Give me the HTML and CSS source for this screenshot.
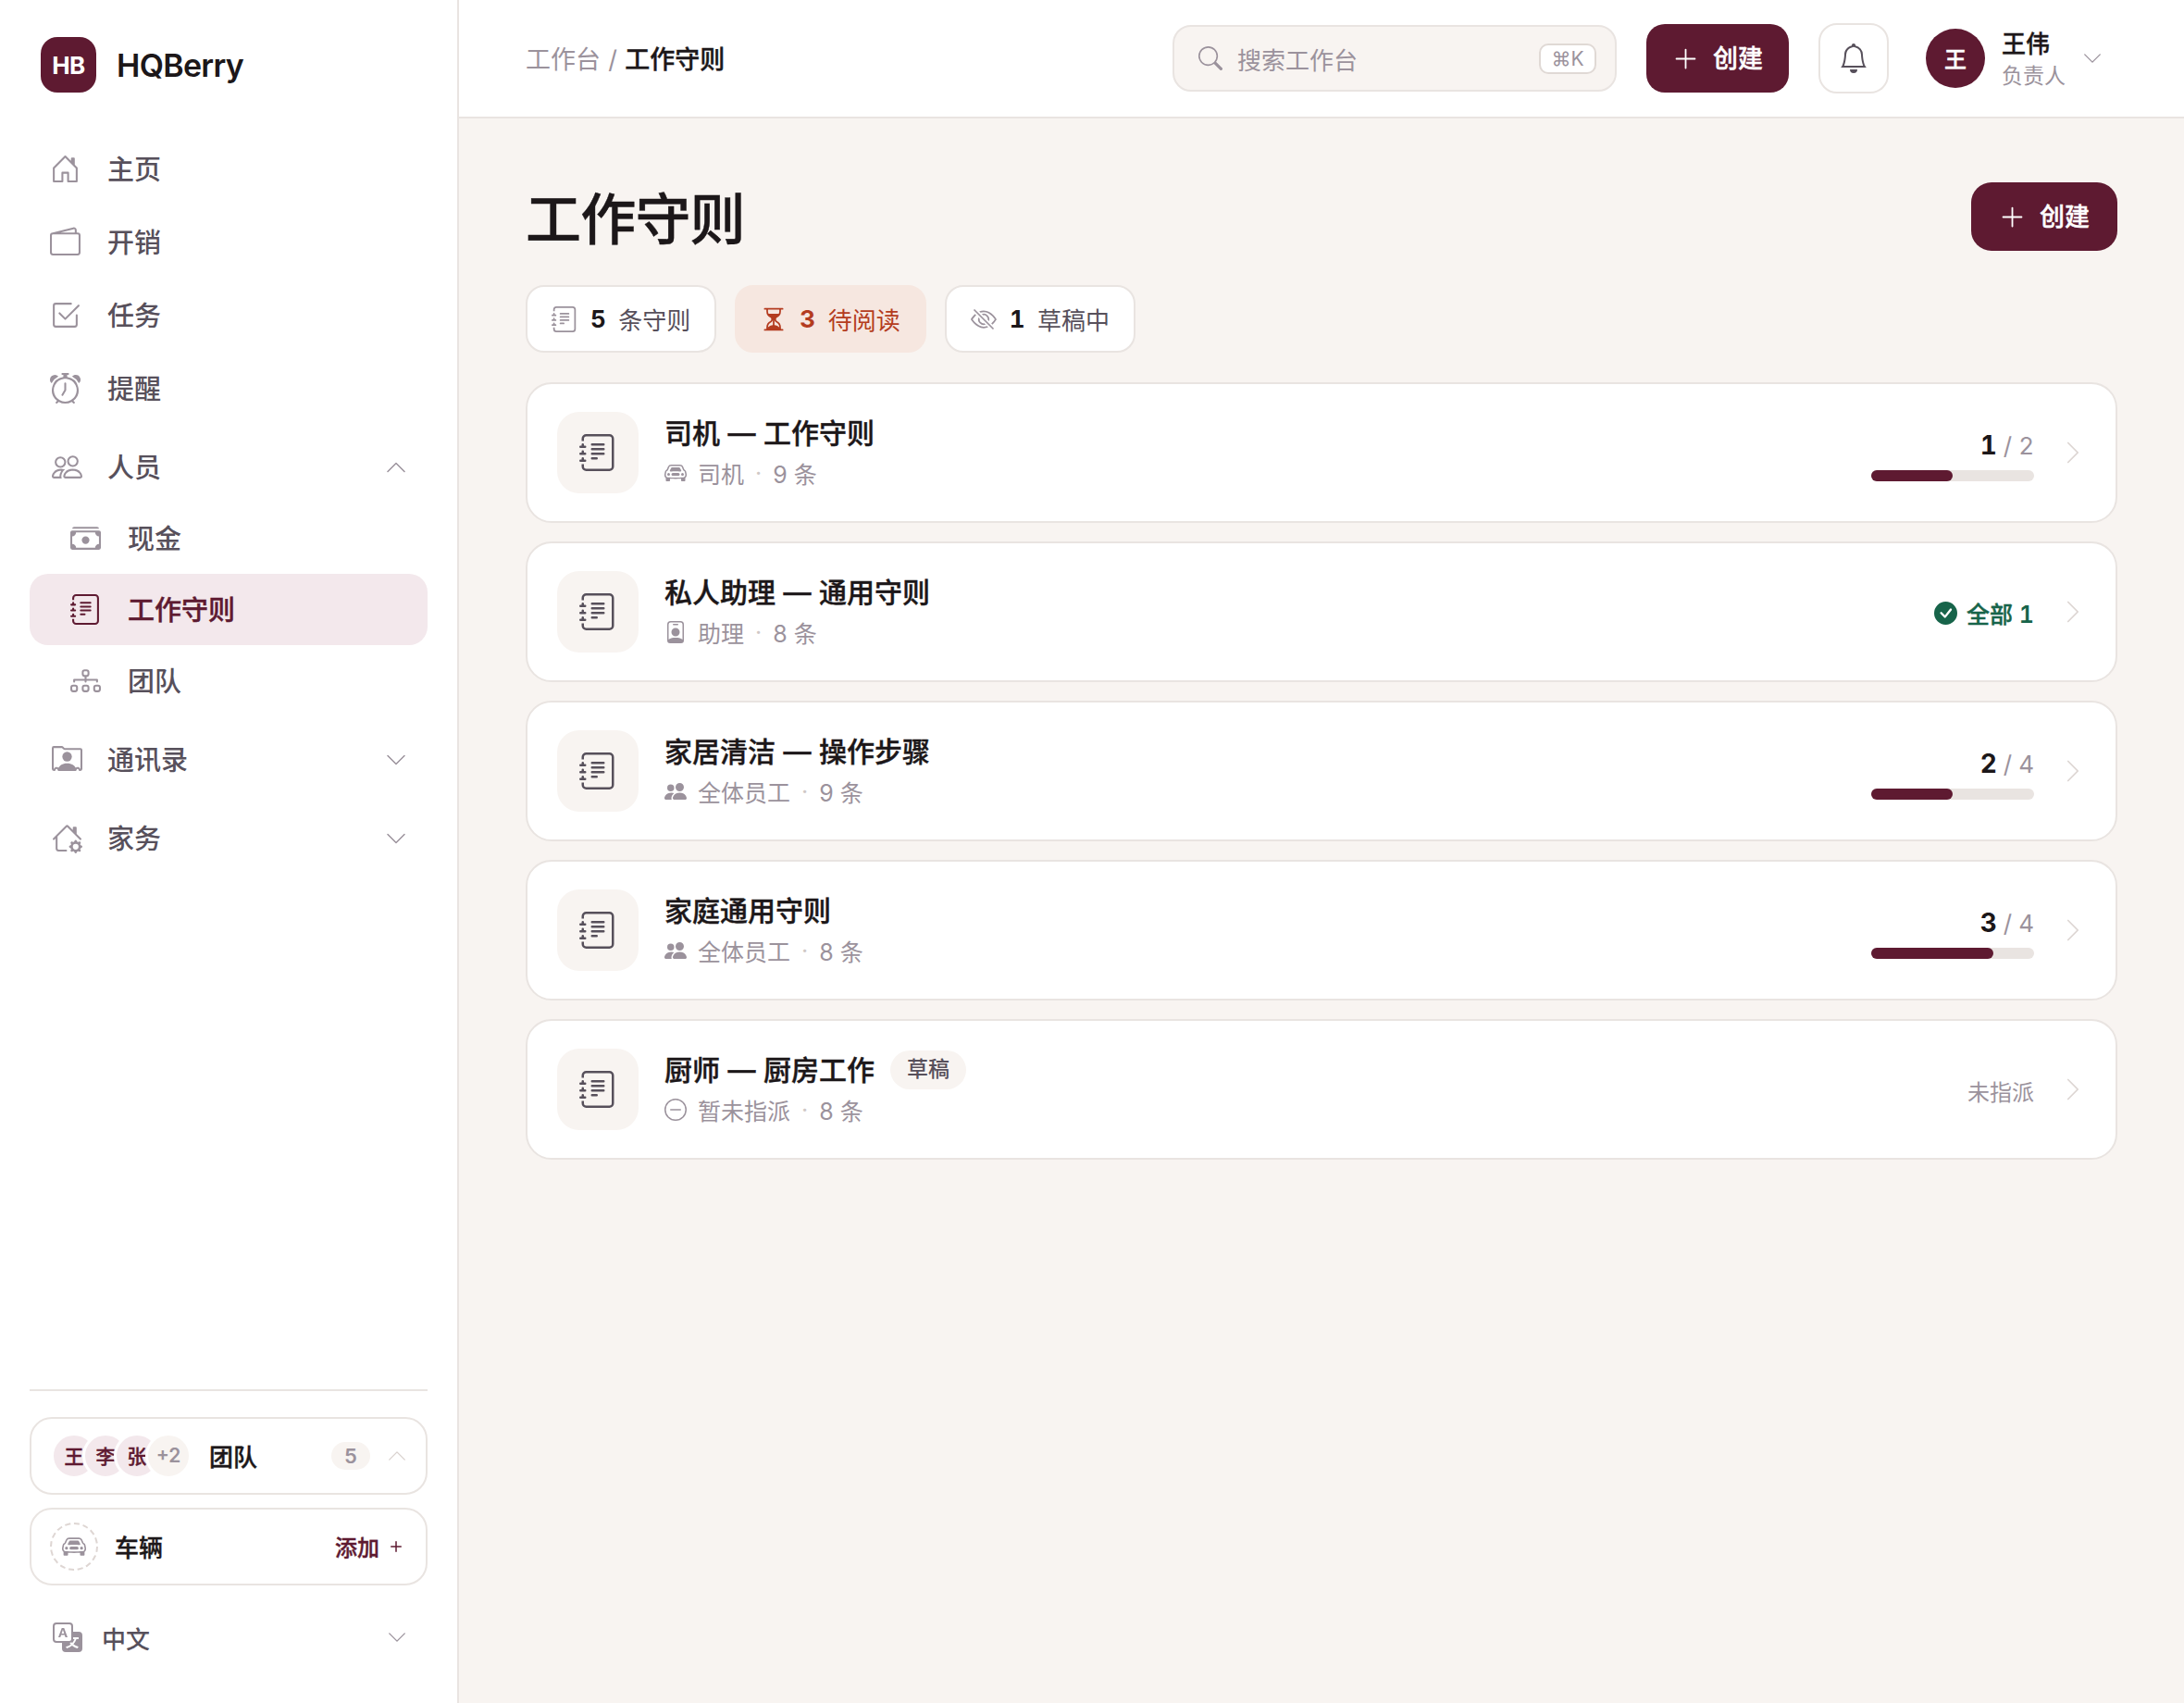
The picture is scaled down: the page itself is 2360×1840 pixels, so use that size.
FILE: index.html
```html
<!DOCTYPE html>
<html lang="zh-CN">
<head>
    <meta charset="utf-8">
    <title>工作守则</title>
    <link rel="stylesheet" href="styles.css">
</head>
<body>

<!-- icon sprite -->
<svg class="sprite" xmlns="http://www.w3.org/2000/svg">
    <symbol id="i-house" viewBox="0 0 16 16"><path d="M8.354 1.146a.5.5 0 0 0-.708 0l-6 6A.5.5 0 0 0 1.5 7.5v7a.5.5 0 0 0 .5.5h4.5a.5.5 0 0 0 .5-.5v-4h2v4a.5.5 0 0 0 .5.5H14a.5.5 0 0 0 .5-.5v-7a.5.5 0 0 0-.146-.354L13 5.793V2.5a.5.5 0 0 0-.5-.5h-1a.5.5 0 0 0-.5.5v1.293zM2.5 14V7.707l5.5-5.5 5.5 5.5V14H10v-4a.5.5 0 0 0-.5-.5h-3a.5.5 0 0 0-.5.5v4z"/></symbol>
    <symbol id="i-wallet" viewBox="0 0 16 16"><path d="M12.136.326A1.5 1.5 0 0 1 14 1.78V3h.5A1.5 1.5 0 0 1 16 4.5v9a1.5 1.5 0 0 1-1.5 1.5h-13A1.5 1.5 0 0 1 0 13.5v-9a1.5 1.5 0 0 1 1.432-1.499zM5.562 3H13V1.78a.5.5 0 0 0-.621-.484zM1.5 4a.5.5 0 0 0-.5.5v9a.5.5 0 0 0 .5.5h13a.5.5 0 0 0 .5-.5v-9a.5.5 0 0 0-.5-.5z"/></symbol>
    <symbol id="i-check-square" viewBox="0 0 16 16"><path d="M3 14.5A1.5 1.5 0 0 1 1.5 13V3A1.5 1.5 0 0 1 3 1.5h8a.5.5 0 0 1 0 1H3a.5.5 0 0 0-.5.5v10a.5.5 0 0 0 .5.5h10a.5.5 0 0 0 .5-.5V8a.5.5 0 0 1 1 0v5a1.5 1.5 0 0 1-1.5 1.5z"/><path d="m8.354 10.354 7-7a.5.5 0 0 0-.708-.708L8 9.293 5.354 6.646a.5.5 0 1 0-.708.708l3 3a.5.5 0 0 0 .708 0"/></symbol>
    <symbol id="i-alarm" viewBox="0 0 16 16"><path d="M8.5 5.5a.5.5 0 0 0-1 0v3.362l-1.429 2.38a.5.5 0 1 0 .858.515l1.5-2.5A.5.5 0 0 0 8.5 9z"/><path d="M6.5 0a.5.5 0 0 0 0 1H7v1.07a7.001 7.001 0 0 0-3.273 12.474l-.602.602a.5.5 0 0 0 .707.708l.746-.746A6.97 6.97 0 0 0 8 16a6.97 6.97 0 0 0 3.422-.892l.746.746a.5.5 0 0 0 .707-.708l-.601-.602A7.001 7.001 0 0 0 9 2.07V1h.5a.5.5 0 0 0 0-1zm1.038 3.018a6 6 0 0 1 .924 0 6 6 0 1 1-.924 0M0 3.5c0 .753.333 1.429.86 1.887A8.04 8.04 0 0 1 4.387 1.86 2.5 2.5 0 0 0 0 3.5M13.5 1c-.753 0-1.429.333-1.887.86a8.04 8.04 0 0 1 3.527 3.527A2.5 2.5 0 0 0 13.5 1"/></symbol>
    <symbol id="i-people" viewBox="0 0 16 16"><path d="M15 14s1 0 1-1-1-4-5-4-5 3-5 4 1 1 1 1zm-7.978-1L7 12.996c.001-.264.167-1.03.76-1.72C8.312 10.629 9.282 10 11 10c1.717 0 2.687.63 3.24 1.276.593.69.758 1.457.76 1.72l-.008.002-.014.002zM11 7a2 2 0 1 0 0-4 2 2 0 0 0 0 4m3-2a3 3 0 1 1-6 0 3 3 0 0 1 6 0M6.936 9.28a6 6 0 0 0-1.23-.247A7 7 0 0 0 5 9c-4 0-5 3-5 4q0 1 1 1h4.216A2.24 2.24 0 0 1 5 13c0-1.01.377-2.042 1.09-2.904.243-.294.526-.569.846-.816M4.92 10A5.5 5.5 0 0 0 4 13H1c0-.26.164-1.03.76-1.724.545-.636 1.492-1.256 3.16-1.275ZM1.5 5.5a3 3 0 1 1 6 0 3 3 0 0 1-6 0m3-2a2 2 0 1 0 0 4 2 2 0 0 0 0-4"/></symbol>
    <symbol id="i-people-fill" viewBox="0 0 16 16"><path d="M7 14s-1 0-1-1 1-4 5-4 5 3 5 4-1 1-1 1zm4-6a3 3 0 1 0 0-6 3 3 0 0 0 0 6m-5.784 6A2.24 2.24 0 0 1 5 13c0-1.355.68-2.75 1.936-3.72A6.3 6.3 0 0 0 5 9c-4 0-5 3-5 4s1 1 1 1zM4.5 8a2.5 2.5 0 1 0 0-5 2.5 2.5 0 0 0 0 5"/></symbol>
    <symbol id="i-cash" viewBox="0 0 16 16"><path d="M1 3a1 1 0 0 1 1-1h12a1 1 0 0 1 1 1zm7 8a2 2 0 1 0 0-4 2 2 0 0 0 0 4"/><path d="M0 5a1 1 0 0 1 1-1h14a1 1 0 0 1 1 1v8a1 1 0 0 1-1 1H1a1 1 0 0 1-1-1zm3 0a2 2 0 0 1-2 2v4a2 2 0 0 1 2 2h10a2 2 0 0 1 2-2V7a2 2 0 0 1-2-2z"/></symbol>
    <symbol id="i-journal" viewBox="0 0 16 16"><path d="M5 10.5a.5.5 0 0 1 .5-.5h2a.5.5 0 0 1 0 1h-2a.5.5 0 0 1-.5-.5m0-2a.5.5 0 0 1 .5-.5h5a.5.5 0 0 1 0 1h-5a.5.5 0 0 1-.5-.5m0-2a.5.5 0 0 1 .5-.5h5a.5.5 0 0 1 0 1h-5a.5.5 0 0 1-.5-.5m0-2a.5.5 0 0 1 .5-.5h5a.5.5 0 0 1 0 1h-5a.5.5 0 0 1-.5-.5"/><path d="M3 0h10a2 2 0 0 1 2 2v12a2 2 0 0 1-2 2H3a2 2 0 0 1-2-2v-1h1v1a1 1 0 0 0 1 1h10a1 1 0 0 0 1-1V2a1 1 0 0 0-1-1H3a1 1 0 0 0-1 1v1H1V2a2 2 0 0 1 2-2"/><path d="M1 5v-.5a.5.5 0 0 1 1 0V5h.5a.5.5 0 0 1 0 1h-2a.5.5 0 0 1 0-1zm0 3v-.5a.5.5 0 0 1 1 0V8h.5a.5.5 0 0 1 0 1h-2a.5.5 0 0 1 0-1zm0 3v-.5a.5.5 0 0 1 1 0v.5h.5a.5.5 0 0 1 0 1h-2a.5.5 0 0 1 0-1z"/></symbol>
    <symbol id="i-diagram" viewBox="0 0 16 16"><path fill-rule="evenodd" d="M6 3.5A1.5 1.5 0 0 1 7.5 2h1A1.5 1.5 0 0 1 10 3.5v1A1.5 1.5 0 0 1 8.5 6v1H14a.5.5 0 0 1 .5.5v1a.5.5 0 0 1-1 0V8h-5v.5a.5.5 0 0 1-1 0V8h-5v.5a.5.5 0 0 1-1 0v-1A.5.5 0 0 1 2 7h5.5V6A1.5 1.5 0 0 1 6 4.5zM8.5 5a.5.5 0 0 0 .5-.5v-1a.5.5 0 0 0-.5-.5h-1a.5.5 0 0 0-.5.5v1a.5.5 0 0 0 .5.5zM0 11.5A1.5 1.5 0 0 1 1.5 10h1A1.5 1.5 0 0 1 4 11.5v1A1.5 1.5 0 0 1 2.5 14h-1A1.5 1.5 0 0 1 0 12.5zm1.5-.5a.5.5 0 0 0-.5.5v1a.5.5 0 0 0 .5.5h1a.5.5 0 0 0 .5-.5v-1a.5.5 0 0 0-.5-.5zm4.5.5A1.5 1.5 0 0 1 7.5 10h1a1.5 1.5 0 0 1 1.5 1.5v1A1.5 1.5 0 0 1 8.5 14h-1A1.5 1.5 0 0 1 6 12.5zm1.5-.5a.5.5 0 0 0-.5.5v1a.5.5 0 0 0 .5.5h1a.5.5 0 0 0 .5-.5v-1a.5.5 0 0 0-.5-.5zm4.5.5a1.5 1.5 0 0 1 1.5-1.5h1a1.5 1.5 0 0 1 1.5 1.5v1a1.5 1.5 0 0 1-1.5 1.5h-1a1.5 1.5 0 0 1-1.5-1.5zm1.5-.5a.5.5 0 0 0-.5.5v1a.5.5 0 0 0 .5.5h1a.5.5 0 0 0 .5-.5v-1a.5.5 0 0 0-.5-.5z"/></symbol>
    <symbol id="i-rolodex" viewBox="0 0 16 16"><path d="M8 9.05a2.5 2.5 0 1 0 0-5 2.5 2.5 0 0 0 0 5"/><path d="M1 1a1 1 0 0 0-1 1v11a1 1 0 0 0 1 1h.5a.5.5 0 0 0 .5-.5.5.5 0 0 1 1 0 .5.5 0 0 0 .5.5h9a.5.5 0 0 0 .5-.5.5.5 0 0 1 1 0 .5.5 0 0 0 .5.5h.5a1 1 0 0 0 1-1V3a1 1 0 0 0-1-1H6.707L6 1.293A1 1 0 0 0 5.293 1zm0 1h4.293L6 2.707A1 1 0 0 0 6.707 3H15v10h-.085a1.5 1.5 0 0 0-2.4-.63C11.885 11.223 10.554 10 8 10c-2.555 0-3.886 1.224-4.514 2.37a1.5 1.5 0 0 0-2.4.63H1z"/></symbol>
    <symbol id="i-house-gear" viewBox="0 0 16 16"><path d="M7.293 1.5a1 1 0 0 1 1.414 0L11 3.793V2.5a.5.5 0 0 1 .5-.5h1a.5.5 0 0 1 .5.5v3.293l2.354 2.353a.5.5 0 0 1-.708.708L8 2.207l-5 5V13.5a.5.5 0 0 0 .5.5h4a.5.5 0 0 1 0 1h-4A1.5 1.5 0 0 1 2 13.5V8.207l-.646.647a.5.5 0 1 1-.708-.708z"/><path d="M11.886 9.46c.18-.613 1.048-.613 1.229 0l.043.148a.64.64 0 0 0 .921.382l.136-.074c.561-.306 1.175.308.87.869l-.075.136a.64.64 0 0 0 .382.92l.149.045c.612.18.612 1.048 0 1.229l-.15.043a.64.64 0 0 0-.38.921l.074.136c.305.561-.309 1.175-.87.87l-.136-.075a.64.64 0 0 0-.92.382l-.045.149c-.18.612-1.048.612-1.229 0l-.043-.15a.64.64 0 0 0-.921-.38l-.136.074c-.561.305-1.175-.309-.87-.87l.075-.136a.64.64 0 0 0-.382-.92l-.148-.045c-.613-.18-.613-1.048 0-1.229l.148-.043a.64.64 0 0 0 .382-.921l-.074-.136c-.306-.561.308-1.175.869-.87l.136.075a.64.64 0 0 0 .92-.382zM14 12.5a1.5 1.5 0 1 0-3 0 1.5 1.5 0 0 0 3 0"/></symbol>
    <symbol id="i-down" viewBox="0 0 16 16"><path d="M1.646 4.646a.5.5 0 0 1 .708 0L8 10.293l5.646-5.647a.5.5 0 0 1 .708.708l-6 6a.5.5 0 0 1-.708 0l-6-6a.5.5 0 0 1 0-.708"/></symbol>
    <symbol id="i-up" viewBox="0 0 16 16"><path d="M7.646 4.646a.5.5 0 0 1 .708 0l6 6a.5.5 0 0 1-.708.708L8 5.707l-5.646 5.647a.5.5 0 0 1-.708-.708z"/></symbol>
    <symbol id="i-right" viewBox="0 0 16 16"><path d="M4.646 1.646a.5.5 0 0 1 .708 0l6 6a.5.5 0 0 1 0 .708l-6 6a.5.5 0 0 1-.708-.708L10.293 8 4.646 2.354a.5.5 0 0 1 0-.708"/></symbol>
    <symbol id="i-car" viewBox="0 0 16 16"><path d="M4 9a1 1 0 1 1-2 0 1 1 0 0 1 2 0m10 0a1 1 0 1 1-2 0 1 1 0 0 1 2 0M6 8a1 1 0 0 0 0 2h4a1 1 0 1 0 0-2zM4.862 4.276 3.906 6.19a.51.51 0 0 0 .497.731c.91-.073 2.35-.17 3.597-.17s2.688.097 3.597.17a.51.51 0 0 0 .497-.731l-.956-1.913A.5.5 0 0 0 10.691 4H5.309a.5.5 0 0 0-.447.276"/><path fill-rule="evenodd" d="M2.52 3.515A2.5 2.5 0 0 1 4.82 2h6.362c1 0 1.904.596 2.298 1.515l.792 1.848c.075.175.21.319.38.404.5.25.855.715.965 1.262l.335 1.679q.05.242.049.49v.413c0 .814-.39 1.543-1 1.997V13.5a.5.5 0 0 1-.5.5h-2a.5.5 0 0 1-.5-.5v-1.338c-1.292.048-2.745.088-4 .088s-2.708-.04-4-.088V13.5a.5.5 0 0 1-.5.5h-2a.5.5 0 0 1-.5-.5v-1.892c-.61-.454-1-1.183-1-1.997v-.413a2.5 2.5 0 0 1 .049-.49l.335-1.68c.11-.546.465-1.012.964-1.261a.8.8 0 0 0 .381-.404zM4.82 3a1.5 1.5 0 0 0-1.379.91l-.792 1.847a1.8 1.8 0 0 1-.853.904.8.8 0 0 0-.43.564L1.03 8.904a1.5 1.5 0 0 0-.03.294v.413c0 .796.62 1.448 1.408 1.484 1.555.07 3.786.155 5.592.155s4.037-.084 5.592-.155A1.48 1.48 0 0 0 15 9.611v-.413q0-.148-.03-.294l-.335-1.68a.8.8 0 0 0-.43-.563 1.8 1.8 0 0 1-.853-.904l-.792-1.848A1.5 1.5 0 0 0 11.18 3z"/></symbol>
    <symbol id="i-translate" viewBox="0 0 16 16"><path d="M4.545 6.714 4.11 8H3l1.862-5h1.284L8 8H6.833l-.435-1.286zm1.634-.736L5.5 3.956h-.049l-.679 2.022z"/><path d="M0 2a2 2 0 0 1 2-2h7a2 2 0 0 1 2 2v3h3a2 2 0 0 1 2 2v7a2 2 0 0 1-2 2H7a2 2 0 0 1-2-2v-3H2a2 2 0 0 1-2-2zm2-1a1 1 0 0 0-1 1v7a1 1 0 0 0 1 1h7a1 1 0 0 0 1-1V2a1 1 0 0 0-1-1zm7.138 9.995q.289.451.63.846c-.748.575-1.673 1.001-2.768 1.292.178.217.451.635.555.867 1.125-.359 2.08-.844 2.886-1.494.777.665 1.739 1.165 2.93 1.472.133-.254.414-.673.629-.89-1.125-.253-2.057-.694-2.82-1.284.681-.747 1.222-1.651 1.621-2.757H14V8h-3v1.047h.765c-.318.844-.74 1.546-1.272 2.13a6 6 0 0 1-.415-.492 2 2 0 0 1-.94.31"/></symbol>
    <symbol id="i-search" viewBox="0 0 16 16"><path d="M11.742 10.344a6.5 6.5 0 1 0-1.397 1.398h-.001q.044.06.098.115l3.85 3.85a1 1 0 0 0 1.415-1.414l-3.85-3.85a1 1 0 0 0-.115-.1zM12 6.5a5.5 5.5 0 1 1-11 0 5.5 5.5 0 0 1 11 0"/></symbol>
    <symbol id="i-plus-lg" viewBox="0 0 16 16"><path d="M8 2a.5.5 0 0 1 .5.5v5h5a.5.5 0 0 1 0 1h-5v5a.5.5 0 0 1-1 0v-5h-5a.5.5 0 0 1 0-1h5v-5A.5.5 0 0 1 8 2"/></symbol>
    <symbol id="i-plus" viewBox="0 0 16 16"><path d="M8 4a.5.5 0 0 1 .5.5v3h3a.5.5 0 0 1 0 1h-3v3a.5.5 0 0 1-1 0v-3h-3a.5.5 0 0 1 0-1h3v-3A.5.5 0 0 1 8 4"/></symbol>
    <symbol id="i-bell" viewBox="0 0 16 16"><path d="M8 16a2 2 0 0 0 2-2H6a2 2 0 0 0 2 2M8 1.918l-.797.161A4 4 0 0 0 4 6c0 .628-.134 2.197-.459 3.742-.16.767-.376 1.566-.663 2.258h10.244c-.287-.692-.502-1.49-.663-2.258C12.134 8.197 12 6.628 12 6a4 4 0 0 0-3.203-3.92zM14.22 12c.223.447.481.801.78 1H1c.299-.199.557-.553.78-1C2.68 10.2 3 6.88 3 6c0-2.42 1.72-4.44 4.005-4.901a1 1 0 1 1 1.99 0A5 5 0 0 1 13 6c0 .88.32 4.2 1.22 6"/></symbol>
    <symbol id="i-hourglass" viewBox="0 0 16 16"><path d="M2.5 15a.5.5 0 1 1 0-1h1v-1a4.5 4.5 0 0 1 2.557-4.06c.29-.139.443-.377.443-.59v-.7c0-.213-.154-.451-.443-.59A4.5 4.5 0 0 1 3.5 3V2h-1a.5.5 0 0 1 0-1h11a.5.5 0 0 1 0 1h-1v1a4.5 4.5 0 0 1-2.557 4.06c-.29.139-.443.377-.443.59v.7c0 .213.154.451.443.59A4.5 4.5 0 0 1 12.5 13v1h1a.5.5 0 0 1 0 1zm2-13v1c0 .537.12 1.045.337 1.5h6.326c.216-.455.337-.963.337-1.5V2zm3 6.35c0 .701-.478 1.236-1.011 1.492A3.5 3.5 0 0 0 4.5 13s.866-1.299 3-1.48zm1 0v3.17c2.134.181 3 1.48 3 1.48a3.5 3.5 0 0 0-1.989-3.158C8.978 9.586 8.5 9.052 8.5 8.351z"/></symbol>
    <symbol id="i-eye-slash" viewBox="0 0 16 16"><path d="M13.359 11.238C15.06 9.72 16 8 16 8s-3-5.5-8-5.5a7 7 0 0 0-2.79.588l.77.771A6 6 0 0 1 8 3.5c2.12 0 3.879 1.168 5.168 2.457A13 13 0 0 1 14.828 8q-.086.13-.195.288c-.335.48-.83 1.12-1.465 1.755q-.247.248-.517.486z"/><path d="M11.297 9.176a3.5 3.5 0 0 0-4.474-4.474l.823.823a2.5 2.5 0 0 1 2.829 2.829zm-2.943 1.299.822.822a3.5 3.5 0 0 1-4.474-4.474l.823.823a2.5 2.5 0 0 0 2.829 2.829"/><path d="M3.35 5.47q-.27.24-.518.487A13 13 0 0 0 1.172 8l.195.288c.335.48.83 1.12 1.465 1.755C4.121 11.332 5.881 12.5 8 12.5c.716 0 1.39-.133 2.02-.36l.77.772A7 7 0 0 1 8 13.5C3 13.5 0 8 0 8s.939-1.721 2.641-3.238l.708.709zm10.296 8.884-12-12 .708-.708 12 12z"/></symbol>
    <symbol id="i-badge" viewBox="0 0 16 16"><path d="M6.5 2a.5.5 0 0 0 0 1h3a.5.5 0 0 0 0-1zM11 8a3 3 0 1 1-6 0 3 3 0 0 1 6 0"/><path d="M4.5 0A2.5 2.5 0 0 0 2 2.5V14a2 2 0 0 0 2 2h8a2 2 0 0 0 2-2V2.5A2.5 2.5 0 0 0 11.5 0zM3 2.5A1.5 1.5 0 0 1 4.5 1h7A1.5 1.5 0 0 1 13 2.5v10.795a4.2 4.2 0 0 0-.776-.492C11.392 12.387 10.063 12 8 12s-3.392.387-4.224.803a4.2 4.2 0 0 0-.776.492z"/></symbol>
    <symbol id="i-dash-circle" viewBox="0 0 16 16"><path d="M8 15A7 7 0 1 1 8 1a7 7 0 0 1 0 14m0 1A8 8 0 1 0 8 0a8 8 0 0 0 0 16"/><path d="M4 8a.5.5 0 0 1 .5-.5h7a.5.5 0 0 1 0 1h-7A.5.5 0 0 1 4 8"/></symbol>
    <symbol id="i-check-fill" viewBox="0 0 16 16"><path d="M16 8A8 8 0 1 1 0 8a8 8 0 0 1 16 0m-3.97-3.03a.75.75 0 0 0-1.08.022L7.477 9.417 5.384 7.323a.75.75 0 0 0-1.06 1.06L6.97 11.03a.75.75 0 0 0 1.079-.02l3.992-4.99a.75.75 0 0 0-.01-1.05z"/></symbol>
</svg>

<div class="app">
    <aside class="sidebar">
        <div class="brand">
            <span class="brand-mark">HB</span>
            <span class="brand-name">HQBerry</span>
        </div>

        <nav class="nav">
            <a class="nav-item"><svg class="icon"><use href="#i-house"/></svg><span>主页</span></a>
            <a class="nav-item"><svg class="icon"><use href="#i-wallet"/></svg><span>开销</span></a>
            <a class="nav-item"><svg class="icon"><use href="#i-check-square"/></svg><span>任务</span></a>
            <a class="nav-item"><svg class="icon"><use href="#i-alarm"/></svg><span>提醒</span></a>

            <div class="nav-group">
                <a class="nav-head"><svg class="icon"><use href="#i-people"/></svg><span>人员</span><svg class="chev"><use href="#i-up"/></svg></a>
                <a class="nav-sub"><svg class="icon"><use href="#i-cash"/></svg><span>现金</span></a>
                <a class="nav-sub active"><svg class="icon"><use href="#i-journal"/></svg><span>工作守则</span></a>
                <a class="nav-sub"><svg class="icon"><use href="#i-diagram"/></svg><span>团队</span></a>
            </div>
            <div class="nav-group">
                <a class="nav-head"><svg class="icon"><use href="#i-rolodex"/></svg><span>通讯录</span><svg class="chev"><use href="#i-down"/></svg></a>
            </div>
            <div class="nav-group">
                <a class="nav-head"><svg class="icon"><use href="#i-house-gear"/></svg><span>家务</span><svg class="chev"><use href="#i-down"/></svg></a>
            </div>
        </nav>

        <div class="side-foot">
            <div class="side-card">
                <div class="stack">
                    <span class="mini">王</span>
                    <span class="mini">李</span>
                    <span class="mini">张</span>
                    <span class="mini more">+2</span>
                </div>
                <span class="side-title team">团队</span>
                <span class="count">5</span>
                <svg class="chev small light"><use href="#i-up"/></svg>
            </div>
            <div class="side-card">
                <span class="dashed"><svg class="car"><use href="#i-car"/></svg></span>
                <span class="side-title">车辆</span>
                <span class="add"><span>添加</span><svg class="add-plus"><use href="#i-plus"/></svg></span>
            </div>
            <div class="lang">
                <svg class="lang-icon"><use href="#i-translate"/></svg>
                <span>中文</span>
                <svg class="chev small"><use href="#i-down"/></svg>
            </div>
        </div>
    </aside>

    <div class="content">
        <header class="topbar">
            <div class="crumbs">工作台 / <b>工作守则</b></div>
            <div class="search">
                <svg class="search-icon"><use href="#i-search"/></svg>
                <span class="search-text">搜索工作台</span>
                <span class="kbd">⌘K</span>
            </div>
            <button class="btn"><svg class="btn-icon"><use href="#i-plus-lg"/></svg><span>创建</span></button>
            <button class="bell"><svg class="bell-icon"><use href="#i-bell"/></svg></button>
            <div class="user">
                <span class="avatar">王</span>
                <div class="user-text">
                    <span class="user-name">王伟</span>
                    <span class="user-role">负责人</span>
                </div>
                <svg class="chev small"><use href="#i-down"/></svg>
            </div>
        </header>

        <main class="main">
            <div class="page-head">
                <h1 class="page-title">工作守则</h1>
                <button class="btn wide"><svg class="btn-icon"><use href="#i-plus-lg"/></svg><span>创建</span></button>
            </div>

            <div class="pills">
                <div class="pill"><svg class="pill-icon"><use href="#i-journal"/></svg><b>5</b><span>条守则</span></div>
                <div class="pill warn"><svg class="pill-icon"><use href="#i-hourglass"/></svg><b>3</b><span>待阅读</span></div>
                <div class="pill"><svg class="pill-icon"><use href="#i-eye-slash"/></svg><b>1</b><span>草稿中</span></div>
            </div>

            <div class="list">
                <div class="card">
                    <span class="tile"><svg class="tile-icon"><use href="#i-journal"/></svg></span>
                    <div class="info">
                        <div class="name">司机 — 工作守则</div>
                        <div class="meta"><svg class="meta-icon"><use href="#i-car"/></svg><span>司机</span><span class="dot">·</span><span>9 条</span></div>
                    </div>
                    <div class="progress">
                        <div class="nums"><b>1</b> / 2</div>
                        <div class="bar"><div class="fill" style="width: 50%"></div></div>
                    </div>
                    <svg class="go"><use href="#i-right"/></svg>
                </div>

                <div class="card">
                    <span class="tile"><svg class="tile-icon"><use href="#i-journal"/></svg></span>
                    <div class="info">
                        <div class="name">私人助理 — 通用守则</div>
                        <div class="meta"><svg class="meta-icon"><use href="#i-badge"/></svg><span>助理</span><span class="dot">·</span><span>8 条</span></div>
                    </div>
                    <div class="done"><svg class="done-icon"><use href="#i-check-fill"/></svg><span>全部 <b>1</b></span></div>
                    <svg class="go"><use href="#i-right"/></svg>
                </div>

                <div class="card">
                    <span class="tile"><svg class="tile-icon"><use href="#i-journal"/></svg></span>
                    <div class="info">
                        <div class="name">家居清洁 — 操作步骤</div>
                        <div class="meta"><svg class="meta-icon"><use href="#i-people-fill"/></svg><span>全体员工</span><span class="dot">·</span><span>9 条</span></div>
                    </div>
                    <div class="progress">
                        <div class="nums"><b>2</b> / 4</div>
                        <div class="bar"><div class="fill" style="width: 50%"></div></div>
                    </div>
                    <svg class="go"><use href="#i-right"/></svg>
                </div>

                <div class="card">
                    <span class="tile"><svg class="tile-icon"><use href="#i-journal"/></svg></span>
                    <div class="info">
                        <div class="name">家庭通用守则</div>
                        <div class="meta"><svg class="meta-icon"><use href="#i-people-fill"/></svg><span>全体员工</span><span class="dot">·</span><span>8 条</span></div>
                    </div>
                    <div class="progress">
                        <div class="nums"><b>3</b> / 4</div>
                        <div class="bar"><div class="fill" style="width: 75%"></div></div>
                    </div>
                    <svg class="go"><use href="#i-right"/></svg>
                </div>

                <div class="card">
                    <span class="tile"><svg class="tile-icon"><use href="#i-journal"/></svg></span>
                    <div class="info">
                        <div class="name">厨师 — 厨房工作<span class="tag">草稿</span></div>
                        <div class="meta"><svg class="meta-icon"><use href="#i-dash-circle"/></svg><span>暂未指派</span><span class="dot">·</span><span>8 条</span></div>
                    </div>
                    <div class="none">未指派</div>
                    <svg class="go"><use href="#i-right"/></svg>
                </div>
            </div>
        </main>
    </div>
</div>

</body>
</html>
```
FILE: styles.css
```css
:root {
    --berry: #5e1a31;
    --berry-soft: #f3e8ec;
    --bg: #f8f4f1;
    --line: #e9e4e1;
    --ink: #1c1719;
    --text: #57505b;
    --muted: #9b929c;
}

* {
    box-sizing: border-box;
}

body {
    margin: 0;
    background: var(--bg);
    color: var(--ink);
    font-family: Inter, "Noto Sans CJK SC", sans-serif;
    font-size: 28px;
}

svg {
    display: block;
    flex: none;
    fill: currentColor;
}

button {
    font: inherit;
    border: 0;
}

.sprite {
    display: none;
}

/* semibold for chinese text: medium plus a hairline stroke */
.active span,
.side-title,
.mini,
.add,
.crumbs b,
.btn,
.avatar,
.user-name,
.page-title,
.name,
.done {
    font-weight: 500;
    -webkit-text-stroke: 0.4px currentColor;
}

/* ---------- sidebar ---------- */
.app {
    display: flex;
    height: 1840px;
}

.sidebar {
    display: flex;
    flex-direction: column;
    width: 496px;
    flex: none;
    padding: 40px 32px 29px;
    background: #fff;
    border-right: 2px solid var(--line);
}

.brand {
    display: flex;
    align-items: center;
    gap: 22px;
    height: 60px;
    padding-left: 12px;
}

.brand-mark {
    display: flex;
    align-items: center;
    justify-content: center;
    width: 60px;
    height: 60px;
    border-radius: 18px;
    background: var(--berry);
    color: #fff;
    font-size: 26px;
    font-weight: 700;
    letter-spacing: -0.5px;
}

.brand-name {
    font-size: 34px;
    font-weight: 600;
    letter-spacing: -0.7px;
}

.nav {
    display: flex;
    flex-direction: column;
    gap: 2px;
    margin-top: 44px;
}

.nav-item,
.nav-head,
.nav-sub {
    display: flex;
    align-items: center;
    height: 77px;
    gap: 29px;
    padding: 0 22px;
    border-radius: 20px;
    color: var(--text);
    font-size: 29px;
    font-weight: 500;
}

.nav-head {
    gap: 27px;
    padding-left: 24px;
}

.nav-sub {
    padding-left: 44px;
}

.nav span {
    padding-bottom: 4px;
}

.nav-group {
    margin-top: 6px;
}

.icon {
    width: 33px;
    height: 33px;
    color: var(--muted);
}

.chev {
    width: 24px;
    height: 24px;
    margin-left: auto;
    color: var(--muted);
}

.chev.small {
    width: 22px;
    height: 22px;
}

.chev.light {
    color: #d9d2cf;
}

.active {
    background: var(--berry-soft);
    color: var(--berry);
}

.active .icon {
    color: var(--berry);
}

.side-foot {
    display: flex;
    flex-direction: column;
    margin-top: auto;
    padding-top: 28px;
    border-top: 2px solid var(--line);
}

.side-card {
    display: flex;
    align-items: center;
    height: 84px;
    margin-bottom: 14px;
    padding: 0 20px 0 21px;
    border: 2px solid var(--line);
    border-radius: 24px;
}

.stack {
    display: flex;
}

.mini {
    display: flex;
    align-items: center;
    justify-content: center;
    width: 50px;
    height: 50px;
    margin-right: -16px;
    padding-bottom: 2px;
    border: 3px solid #fff;
    border-radius: 50%;
    background: var(--berry-soft);
    color: var(--berry);
    font-size: 21px;
}

.mini.more {
    margin-right: 0;
    background: var(--bg);
    color: var(--muted);
    font-weight: 600;
    -webkit-text-stroke: 0;
}

.side-title {
    margin-left: 18px;
    padding-bottom: 2px;
    font-size: 26px;
}

.side-title.team {
    margin-left: 19px;
}

.count {
    width: 42px;
    height: 30px;
    margin-left: auto;
    margin-right: 18px;
    border-radius: 15px;
    background: var(--bg);
    color: var(--muted);
    font-size: 22px;
    font-weight: 600;
    line-height: 30px;
    text-align: center;
}

.count + .chev {
    margin-left: 0;
}

.dashed {
    display: flex;
    align-items: center;
    justify-content: center;
    width: 52px;
    height: 52px;
    margin-left: -1px;
    border: 2px dashed #ded6d3;
    border-radius: 50%;
    color: var(--muted);
}

.car {
    width: 26px;
    height: 26px;
}

.add {
    display: flex;
    align-items: center;
    gap: 6px;
    margin-left: auto;
    color: var(--berry);
    font-size: 24px;
}

.add span {
    padding-bottom: 2px;
}

.add-plus {
    width: 24px;
    height: 24px;
}

.lang {
    display: flex;
    align-items: center;
    height: 84px;
    padding: 0 22px 0 25px;
    color: var(--text);
    font-size: 26px;
    font-weight: 500;
}

.lang-icon {
    width: 32px;
    height: 32px;
    margin-right: 21px;
    color: var(--muted);
}

/* ---------- top bar ---------- */
.content {
    flex: 1;
    min-width: 0;
}

.topbar {
    display: flex;
    align-items: center;
    gap: 32px;
    height: 128px;
    padding: 0 72px;
    background: #fff;
    border-bottom: 2px solid var(--line);
}

.crumbs {
    margin-right: auto;
    padding-bottom: 2px;
    color: var(--muted);
    font-size: 27px;
    word-spacing: 0.7px;
}

.crumbs b {
    color: var(--ink);
}

.search {
    display: flex;
    align-items: center;
    gap: 16px;
    width: 480px;
    height: 72px;
    padding: 0 20px 0 26px;
    background: var(--bg);
    border: 2px solid var(--line);
    border-radius: 20px;
    color: var(--muted);
    font-size: 26px;
}

.search-icon {
    width: 26px;
    height: 26px;
}

.kbd {
    width: 62px;
    height: 33px;
    margin-left: auto;
    background: #fff;
    border: 2px solid #e0d9d5;
    border-radius: 10px;
    font-size: 21px;
    line-height: 29px;
    text-align: center;
}

.btn {
    display: flex;
    align-items: center;
    gap: 15px;
    height: 74px;
    padding: 0 28px;
    background: var(--berry);
    border-radius: 20px;
    color: #fff;
    font-size: 27px;
}

.btn span {
    padding-bottom: 3px;
}

.btn.wide {
    padding: 0 30px;
    border-radius: 22px;
}

.btn-icon {
    width: 29px;
    height: 29px;
}

.bell {
    display: flex;
    align-items: center;
    justify-content: center;
    width: 76px;
    height: 76px;
    padding: 0;
    background: #fff;
    border: 2px solid var(--line);
    border-radius: 20px;
    color: var(--text);
}

.bell-icon {
    width: 32px;
    height: 32px;
}

.user {
    display: flex;
    align-items: center;
    padding: 0 16px 0 8px;
}

.avatar {
    display: flex;
    align-items: center;
    justify-content: center;
    width: 64px;
    height: 64px;
    margin-right: 18px;
    padding-bottom: 2px;
    border-radius: 50%;
    background: var(--berry);
    color: #fff;
    font-size: 24px;
}

.user-text {
    display: flex;
    flex-direction: column;
    margin-right: 18px;
    padding-top: 4px;
}

.user-name {
    font-size: 26px;
    line-height: 34px;
}

.user-role {
    color: var(--muted);
    font-size: 23px;
    line-height: 34px;
}

/* ---------- page ---------- */
.main {
    padding: 69px 72px 0;
}

.page-head {
    display: flex;
    align-items: center;
    justify-content: space-between;
    height: 74px;
}

.page-title {
    margin: 0;
    padding-top: 5px;
    font-size: 60px;
    letter-spacing: -0.8px;
    line-height: 74px;
}

.pills {
    display: flex;
    gap: 20px;
    margin-top: 37px;
}

.pill {
    display: flex;
    align-items: center;
    height: 73px;
    padding: 0 26px;
    background: #fff;
    border: 2px solid var(--line);
    border-radius: 20px;
    color: var(--text);
    font-size: 26px;
}

.pill b {
    margin: 0 13.5px 0 14px;
    color: var(--ink);
    font-weight: 700;
    font-variant-numeric: tabular-nums;
}

.pill-icon {
    width: 28px;
    height: 28px;
    color: var(--muted);
}

.pill.warn {
    background: #f6e7e0;
    border-color: #f6e7e0;
}

.pill.warn,
.pill.warn b,
.pill.warn .pill-icon {
    color: #b43c20;
}

.list {
    display: flex;
    flex-direction: column;
    gap: 20px;
    margin-top: 32px;
}

.card {
    display: flex;
    align-items: center;
    height: 152px;
    padding: 0 32px;
    background: #fff;
    border: 2px solid var(--line);
    border-radius: 28px;
}

.tile {
    display: flex;
    align-items: center;
    justify-content: center;
    width: 88px;
    height: 88px;
    margin-right: 28px;
    border-radius: 24px;
    background: var(--bg);
    color: var(--text);
}

.tile-icon {
    width: 40px;
    height: 40px;
}

.info {
    margin-right: auto;
    padding-bottom: 4px;
}

.name {
    display: flex;
    align-items: center;
    height: 42px;
    font-size: 30px;
    word-spacing: 0.5px;
}

.tag {
    height: 42px;
    margin-top: 4px;
    margin-left: 17px;
    padding: 0 18px;
    border-radius: 21px;
    background: var(--bg);
    color: var(--text);
    font-size: 23px;
    font-weight: 500;
    line-height: 40px;
    -webkit-text-stroke: 0;
}

.meta {
    display: flex;
    align-items: center;
    gap: 12px;
    height: 36px;
    margin-top: 6px;
    color: var(--muted);
    font-size: 25px;
}

.meta-icon {
    width: 24px;
    height: 24px;
}

.dot {
    color: #cfc8c6;
}

.progress {
    width: 176px;
    padding-top: 4px;
}

.nums {
    color: var(--muted);
    font-size: 26px;
    line-height: 36px;
    text-align: right;
    font-variant-numeric: tabular-nums;
}

.nums b {
    color: var(--ink);
    font-size: 28px;
    font-weight: 700;
}

.bar {
    height: 12px;
    margin-top: 8px;
    border-radius: 6px;
    background: #e9e4e1;
}

.fill {
    height: 12px;
    border-radius: 6px;
    background: var(--berry);
}

.done {
    display: flex;
    align-items: center;
    gap: 10px;
    padding-top: 2px;
    color: #17644a;
    font-size: 25px;
    font-variant-numeric: tabular-nums;
}

.done b {
    font-weight: 600;
    -webkit-text-stroke: 0;
}

.done-icon {
    width: 25px;
    height: 25px;
}

.none {
    padding-top: 3px;
    color: var(--muted);
    font-size: 24px;
}

.go {
    width: 28px;
    height: 28px;
    margin-left: 28px;
    color: #ddd6d3;
}
```
